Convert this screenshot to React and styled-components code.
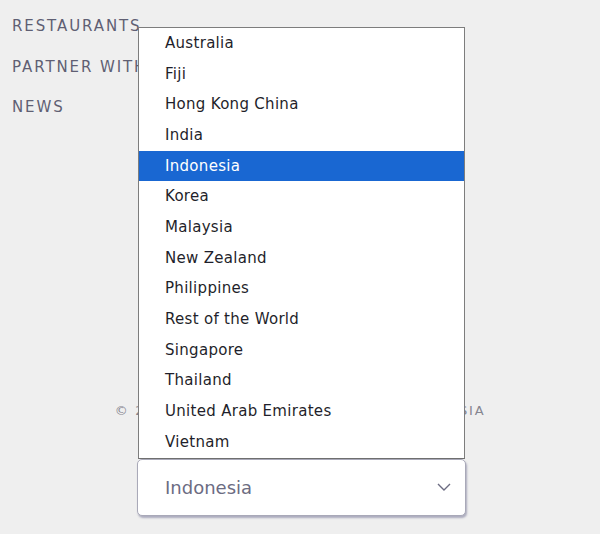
import React from 'react';
import styled, { createGlobalStyle } from 'styled-components';

const GlobalStyle = createGlobalStyle`
  html, body {
    margin: 0;
    padding: 0;
    background: #efefef;
  }
  body {
    font-family: 'DejaVu Sans', 'Liberation Sans', sans-serif;
  }
`;

const Page = styled.div`
  width: 600px;
  height: 534px;
  overflow: hidden;
  background: #efefef;
`;

const Nav = styled.ul`
  list-style: none;
  margin: 0;
  padding: 6px 0 0 12px;
`;

const NavItem = styled.li`
  line-height: 40.5px;
  font-size: 15px;
  letter-spacing: 1.9px;
  color: #5f5f73;
  white-space: nowrap;
`;

const Footer = styled.p`
  margin: 273px 0 0;
  text-align: center;
  line-height: 20px;
  font-size: 13px;
  letter-spacing: 1.75px;
  color: #85858f;
  white-space: nowrap;
`;

const SelectWrap = styled.div`
  position: relative;
  width: 329px;
  margin: 38px auto 0 137px;
`;

const SelectBox = styled.div`
  box-sizing: border-box;
  height: 57px;
  display: flex;
  align-items: center;
  justify-content: space-between;
  padding: 0 14px 0 27px;
  background: #fff;
  border: 1px solid #a9a9b8;
  border-radius: 5px;
  box-shadow: 1px 2px 2px rgba(90, 90, 130, 0.45);
  font-size: 18px;
  color: #6c6c82;
`;

const Menu = styled.ul`
  position: absolute;
  left: 1px;
  right: 1px;
  bottom: 100%;
  margin: 0;
  padding: 0;
  list-style: none;
  background: #fff;
  border: 1px solid #7d7d7d;
  border-bottom-color: #6f6f6f;
`;

const Option = styled.li`
  height: 30.7px;
  line-height: 30.7px;
  padding-left: 26px;
  font-size: 15px;
  letter-spacing: 0.3px;
  color: ${(p) => (p.$active ? '#fff' : '#1f1f2b')};
  background: ${(p) => (p.$active ? '#1967d2' : 'transparent')};
`;

const countries = [
  'Australia',
  'Fiji',
  'Hong Kong China',
  'India',
  'Indonesia',
  'Korea',
  'Malaysia',
  'New Zealand',
  'Philippines',
  'Rest of the World',
  'Singapore',
  'Thailand',
  'United Arab Emirates',
  'Vietnam',
];

const Chevron = () => (
  <svg width="14" height="8" viewBox="0 0 14 8" fill="none">
    <path d="M1 1l6 6 6-6" stroke="#6c6c82" strokeWidth="1.4" />
  </svg>
);

export default function App() {
  const selected = 'Indonesia';
  return (
    <Page>
      <GlobalStyle />
      <Nav>
        <NavItem>RESTAURANTS</NavItem>
        <NavItem>PARTNER WITH US</NavItem>
        <NavItem>NEWS</NavItem>
      </Nav>
      <Footer>© 2024 DINING CITY GROUP SOUTHEAST ASIA</Footer>
      <SelectWrap>
        <Menu>
          {countries.map((c) => (
            <Option key={c} $active={c === selected}>
              {c}
            </Option>
          ))}
        </Menu>
        <SelectBox>
          <span>{selected}</span>
          <Chevron />
        </SelectBox>
      </SelectWrap>
    </Page>
  );
}
